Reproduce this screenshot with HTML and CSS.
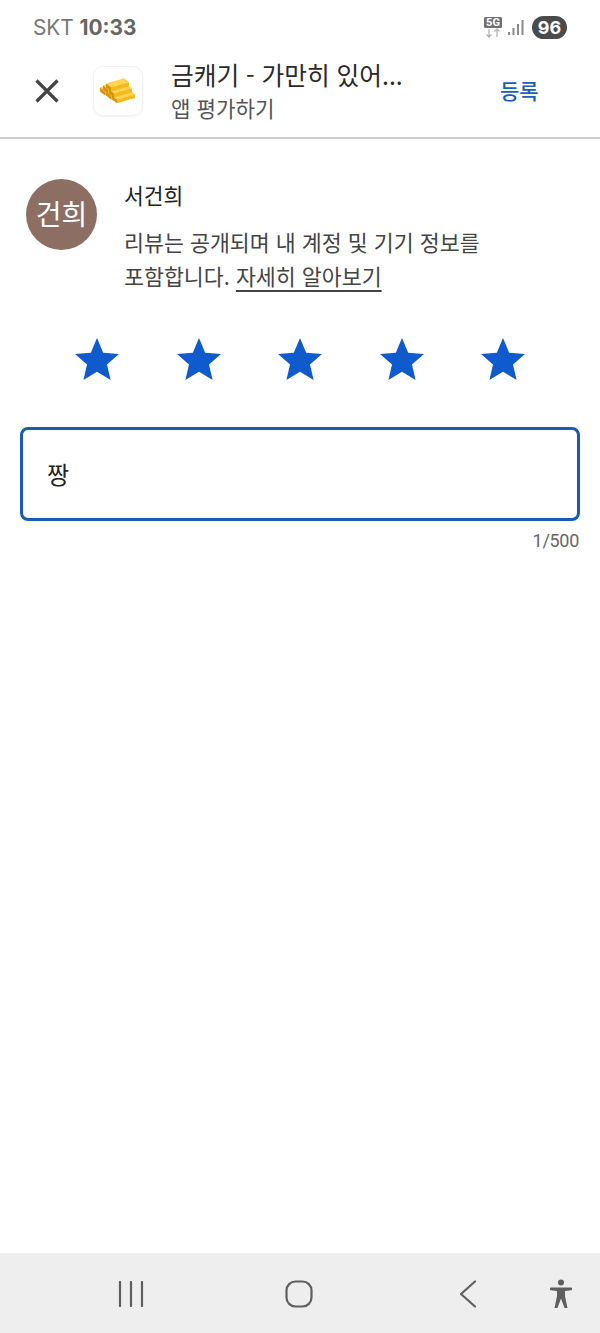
FILE: index.html
```html
<!DOCTYPE html>
<html lang="ko">

<head>
    <meta charset="UTF-8">
    <meta name="viewport" content="width=device-width, initial-scale=1.0">
    <title>앱 평가하기</title>
    <link rel="stylesheet" href="styles.css">
</head>

<body>
    <div class="status_bar">
        <p class="status_left">SKT <b>10:33</b></p>
        <div class="status_right">
            <svg class="net_icon" width="19" height="22" viewBox="0 0 19 22">
                <rect x="0" y="0" width="18" height="11" rx="1.5" fill="#707070" />
                <text x="9" y="9.300" class="net_text" text-anchor="middle">5G</text>
                <path d="M5 12v8M2.500 17.500 5 20l2.500-2.500M13 20v-8M10.500 14.500 13 12l2.500 2.500" fill="none" stroke="#b5b5b5" stroke-width="1.300" />
            </svg>
            <svg class="signal_icon" width="16" height="17" viewBox="0 0 16 17">
                <rect x="0" y="13" width="2" height="3" fill="#8a8a8a" />
                <rect x="4.500" y="9" width="2" height="7" fill="#8a8a8a" />
                <rect x="9" y="5" width="2" height="11" fill="#8a8a8a" />
                <rect x="13.500" y="1" width="2" height="15" fill="#8a8a8a" />
            </svg>
            <span class="battery">96</span>
        </div>
    </div>

    <div class="app_header">
        <svg class="close_icon" width="26" height="26" viewBox="0 0 26 26">
            <path d="M2.500 2.500 23.500 23.500M23.500 2.500 2.500 23.500" stroke="#444" stroke-width="3.200" fill="none" />
        </svg>
        <div class="app_icon">
            <svg width="38" height="29" viewBox="0 7 38 22" preserveAspectRatio="none">
                <defs>
                    <g id="bar">
                        <path d="M0 4 18 0 23 3 5 7z" fill="#fdd54f" />
                        <path d="M5 7 23 3v3L5 10z" fill="#f5b81f" />
                        <path d="M0 4 5 7v3L0 7z" fill="#d8930f" />
                    </g>
                </defs>
                <use href="#bar" x="1" y="11" />
                <use href="#bar" x="7" y="14" />
                <use href="#bar" x="13" y="17" />
                <use href="#bar" x="4" y="9.500" />
                <use href="#bar" x="10" y="12.500" />
                <use href="#bar" x="7" y="8" />
            </svg>
        </div>
        <div class="app_info">
            <p class="app_name">금캐기 - 가만히 있어...</p>
            <p class="app_sub">앱 평가하기</p>
        </div>
        <p class="submit">등록</p>
    </div>

    <div class="main">
        <div class="user_row">
            <div class="avatar">건희</div>
            <div class="user_info">
                <p class="user_name">서건희</p>
                <p class="notice">리뷰는 공개되며 내 계정 및 기기 정보를<br>포함합니다. <span class="learn_more">자세히 알아보기</span></p>
            </div>
        </div>

        <div class="stars">
            <svg class="star" viewBox="2 2 20 19"><path d="M12 17.270 18.180 21l-1.640-7.030L22 9.240l-7.190-.610L12 2 9.190 8.630 2 9.240l5.460 4.730L5.820 21z" /></svg>
            <svg class="star" viewBox="2 2 20 19"><path d="M12 17.270 18.180 21l-1.640-7.030L22 9.240l-7.190-.610L12 2 9.190 8.630 2 9.240l5.460 4.730L5.820 21z" /></svg>
            <svg class="star" viewBox="2 2 20 19"><path d="M12 17.270 18.180 21l-1.640-7.030L22 9.240l-7.190-.610L12 2 9.190 8.630 2 9.240l5.460 4.730L5.820 21z" /></svg>
            <svg class="star" viewBox="2 2 20 19"><path d="M12 17.270 18.180 21l-1.640-7.030L22 9.240l-7.190-.610L12 2 9.190 8.630 2 9.240l5.460 4.730L5.820 21z" /></svg>
            <svg class="star" viewBox="2 2 20 19"><path d="M12 17.270 18.180 21l-1.640-7.030L22 9.240l-7.190-.610L12 2 9.190 8.630 2 9.240l5.460 4.730L5.820 21z" /></svg>
        </div>

        <div class="review_box">짱</div>
        <p class="counter">1/500</p>
    </div>

    <div class="nav_bar">
        <svg class="nav_recent" width="26" height="26" viewBox="0 0 26 26">
            <path d="M2 1v24M13 1v24M24 1v24" stroke="#5f5f5f" stroke-width="2.200" stroke-linecap="round" fill="none" />
        </svg>
        <svg class="nav_home" width="28" height="28" viewBox="0 0 28 28">
            <rect x="1.500" y="1.500" width="25" height="25" rx="9" stroke="#5f5f5f" stroke-width="2.200" fill="none" />
        </svg>
        <svg class="nav_back" width="18" height="28" viewBox="0 0 18 28">
            <path d="M16 1.500 2 14 16 26.500" stroke="#5f5f5f" stroke-width="2.200" stroke-linecap="round" stroke-linejoin="round" fill="none" />
        </svg>
        <svg class="nav_access" width="22" height="30" viewBox="0 0 22 30">
            <circle cx="11" cy="3.500" r="3" fill="#5f5f5f" />
            <path d="M1 8.500h20a1.200 1.200 0 0 1 0 2.800l-6 .8 0 5 2.500 11.900h-3L11 19.500 7.500 29h-3L7 17.100l0-5-6-.8a1.200 1.200 0 0 1 0-2.800z" fill="#5f5f5f" />
        </svg>
    </div>
</body>

</html>
```

FILE: styles.css
```css
* {
    margin: 0;
    padding: 0;
    box-sizing: border-box;
}

body {
    display: flex;
    flex-direction: column;
    height: 100vh;
    background: #fff;
    font-family: "Noto Sans CJK KR", "Noto Sans", sans-serif;
    color: #222;
}

/* Status bar */
.status_bar {
    display: flex;
    justify-content: space-between;
    align-items: center;
    height: 55px;
    margin-bottom: 1px;
    padding: 0 33px;
}

.status_left {
    font-family: Inter, Roboto, sans-serif;
    font-size: 20.800px;
    color: #777;
}

.status_left b {
    color: #666;
    font-weight: 700;
}

.status_right {
    display: flex;
    align-items: center;
}

.net_text {
    font-family: Roboto, sans-serif;
    font-size: 11px;
    font-weight: 700;
    fill: #fff;
}

.signal_icon {
    margin-left: 5px;
}

.battery {
    width: 35px;
    height: 23px;
    margin-left: 8px;
    border-radius: 12px;
    background: #4b4b4b;
    color: #fff;
    font-family: Inter, Roboto, sans-serif;
    font-size: 18px;
    font-weight: 700;
    line-height: 23px;
    text-align: center;
}

/* App header */
.app_header {
    display: flex;
    align-items: center;
    height: 83px;
    padding: 0 0 11px 34px;
    border-bottom: 2px solid #cfcfcf;
}

.close_icon {
    flex: none;
}

.app_icon {
    display: flex;
    align-items: center;
    justify-content: center;
    flex: none;
    width: 50px;
    height: 50px;
    margin-left: 33px;
    border: 1px solid #f0f0f0;
    border-radius: 10px;
    box-shadow: 0 1px 2px rgba(0, 0, 0, .06);
}

.app_info {
    flex: 1;
    margin-bottom: 1px;
    margin-left: 28px;
}

.app_name {
    font-size: 24.700px;
    line-height: 30px;
    color: #2a2a2a;
}

.app_sub {
    margin-top: 5px;
    font-size: 21.200px;
    line-height: 28px;
    color: #555;
}

.submit {
    width: 100px;
    margin-bottom: 3px;
    font-size: 21px;
    font-weight: 500;
    color: #1a5fb8;
}

/* Content */
.main {
    flex: 1;
    padding: 40px 20px 0;
}

.user_row {
    display: flex;
    padding-left: 6px;
}

.avatar {
    flex: none;
    width: 71px;
    height: 71px;
    border-radius: 50%;
    background: #8d6e63;
    color: #fff;
    font-size: 28px;
    line-height: 68px;
    text-align: center;
}

.user_info {
    margin-left: 27px;
}

.user_name {
    font-size: 21.500px;
    line-height: 32px;
    color: #222;
}

.notice {
    margin-top: 14px;
    font-size: 21.700px;
    line-height: 34px;
    color: #444;
}

.learn_more {
    text-decoration: underline;
    text-decoration-thickness: 2px;
    text-underline-offset: 5px;
}

.stars {
    display: flex;
    justify-content: space-between;
    margin-top: 45px;
    padding: 0 55px;
}

.star {
    width: 44px;
    height: 42px;
    fill: #0f5bce;
}

.review_box {
    height: 94px;
    margin-top: 47px;
    padding-left: 24px;
    border: 3px solid #1a5ab5;
    border-radius: 8px;
    font-size: 24px;
    line-height: 88px;
    color: #222;
}

.counter {
    margin-top: 9px;
    padding-right: 1px;
    font-family: Roboto, sans-serif;
    font-size: 18px;
    letter-spacing: -.3px;
    line-height: 22px;
    color: #666;
    text-align: right;
}

/* Navigation bar */
.nav_bar {
    display: flex;
    align-items: center;
    flex: none;
    height: 80px;
    padding-top: 2px;
    background: #eee;
}

.nav_recent {
    margin-left: 118px;
}

.nav_home {
    margin-left: 141px;
}

.nav_back {
    margin-left: 146px;
}

.nav_access {
    margin-left: 73px;
}
```
